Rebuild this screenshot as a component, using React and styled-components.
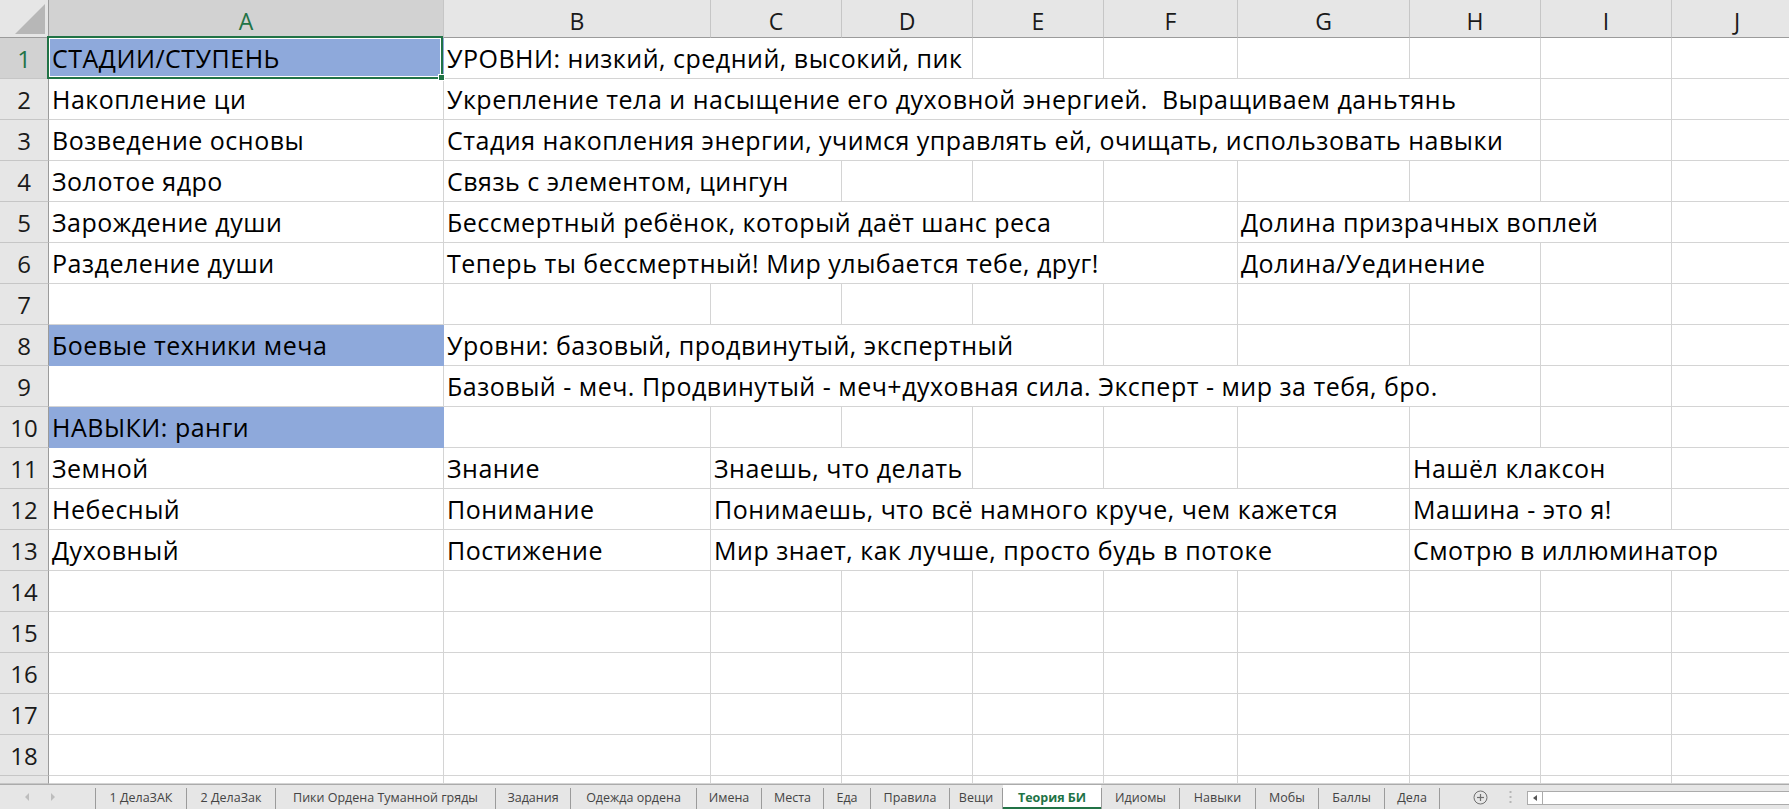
import React from "react";
import styled, { createGlobalStyle, css } from "styled-components";

const FONT = `"Open Sans", "Noto Sans", sans-serif`;

const GlobalStyle = createGlobalStyle`
  html, body { margin: 0; padding: 0; background: #fff; overflow: hidden; }
  #root { width: 1789px; height: 809px; }
`;

const COLS = ["A", "B", "C", "D", "E", "F", "G", "H", "I", "J"];
const WIDTHS = [395, 267, 131, 131, 131, 134, 172, 131, 131, 131];

const empty = (n) => Array.from({ length: n }, () => ({}));

const ROWS = [
  [{ t: "СТАДИИ/СТУПЕНЬ", fill: true, sel: true }, { t: "УРОВНИ: низкий, средний, высокий, пик", s: 3 }, ...empty(6)],
  [{ t: "Накопление ци" }, { t: "Укрепление тела и насыщение его духовной энергией.  Выращиваем даньтянь", s: 7 }, ...empty(2)],
  [{ t: "Возведение основы" }, { t: "Стадия накопления энергии, учимся управлять ей, очищать, использовать навыки", s: 7 }, ...empty(2)],
  [{ t: "Золотое ядро" }, { t: "Связь с элементом, цингун", s: 2 }, ...empty(7)],
  [{ t: "Зарождение души" }, { t: "Бессмертный ребёнок, который даёт шанс реса", s: 4 }, {}, { t: "Долина призрачных воплей", s: 3 }, {}],
  [{ t: "Разделение души" }, { t: "Теперь ты бессмертный! Мир улыбается тебе, друг!", s: 5 }, { t: "Долина/Уединение", s: 2 }, ...empty(2)],
  [...empty(10)],
  [{ t: "Боевые техники меча", fill: true }, { t: "Уровни: базовый, продвинутый, экспертный", s: 4 }, ...empty(5)],
  [{}, { t: "Базовый - меч. Продвинутый - меч+духовная сила. Эксперт - мир за тебя, бро.", s: 7 }, ...empty(2)],
  [{ t: "НАВЫКИ: ранги", fill: true }, ...empty(9)],
  [{ t: "Земной" }, { t: "Знание" }, { t: "Знаешь, что делать", s: 2 }, ...empty(3), { t: "Нашёл клаксон", s: 2 }, {}],
  [{ t: "Небесный" }, { t: "Понимание" }, { t: "Понимаешь, что всё намного круче, чем кажется", s: 5 }, { t: "Машина - это я!", s: 2 }, {}],
  [{ t: "Духовный" }, { t: "Постижение" }, { t: "Мир знает, как лучше, просто будь в потоке", s: 5 }, { t: "Смотрю в иллюминатор", s: 3 }],
  ...Array.from({ length: 5 }, () => empty(10)),
];

const TABS = [
  { t: "1 ДелаЗАК", w: 90 },
  { t: "2 ДелаЗак", w: 88 },
  { t: "Пики Ордена Туманной гряды", w: 219 },
  { t: "Задания", w: 74 },
  { t: "Одежда ордена", w: 125 },
  { t: "Имена", w: 64 },
  { t: "Места", w: 61 },
  { t: "Еда", w: 46 },
  { t: "Правила", w: 78 },
  { t: "Вещи", w: 52 },
  { t: "Теория БИ", w: 98, active: true },
  { t: "Идиомы", w: 77 },
  { t: "Навыки", w: 75 },
  { t: "Мобы", w: 62 },
  { t: "Баллы", w: 65 },
  { t: "Дела", w: 54 },
];

const Window = styled.div`
  width: 1789px;
  height: 809px;
  display: flex;
  flex-direction: column;
  overflow: hidden;
  background: #fff;
  font-family: ${FONT};
`;

const Sheet = styled.div`
  flex: 0 0 784px;
  width: 1789px;
  display: grid;
  grid-template-columns: 49px ${WIDTHS.map((w) => `${w}px`).join(" ")};
  grid-template-rows: 38px repeat(18, 41px) 8px;
  overflow: hidden;
`;

const Corner = styled.div`
  box-sizing: border-box;
  background: #e6e6e6;
  border-right: 1px solid #9b9b9b;
  border-bottom: 1px solid #9b9b9b;
  display: flex;
  align-items: flex-end;
  justify-content: flex-end;
  padding: 0 3px 3px 0;
`;

const ColHeader = styled.div`
  box-sizing: border-box;
  background: ${(p) => (p.$active ? "#d2d2d2" : "#e6e6e6")};
  color: ${(p) => (p.$active ? "#217346" : "#1a1a1a")};
  border-right: 1px solid #c6c6c6;
  border-bottom: 1px solid #9b9b9b;
  display: flex;
  align-items: center;
  justify-content: center;
  padding-top: 4px;
  font-size: 23px;
`;

const RowHeader = styled.div`
  box-sizing: border-box;
  background: ${(p) => (p.$active ? "#d2d2d2" : "#e6e6e6")};
  color: ${(p) => (p.$active ? "#217346" : "#1a1a1a")};
  border-right: 1px solid #9b9b9b;
  border-bottom: 1px solid #c6c6c6;
  display: flex;
  align-items: center;
  justify-content: center;
  font-size: 24px;
`;

const Cell = styled.div`
  grid-column: span ${(p) => p.$span};
  box-sizing: border-box;
  position: relative;
  min-width: 0;
  border-right: 1px solid ${(p) => (p.$fill ? "#8ea9db" : "#d4d4d4")};
  border-bottom: 1px solid ${(p) => (p.$fill ? "#8ea9db" : "#d4d4d4")};
  background: ${(p) => (p.$fill ? "#8ea9db" : "transparent")};
  display: flex;
  align-items: flex-end;
  padding: 0 0 7px 3px;
  font-size: 25px;
  line-height: 25px;
  letter-spacing: 0.5px;
  white-space: pre;
  color: #000;
`;

const Selection = styled.div`
  position: absolute;
  left: -2px;
  top: -2px;
  right: 0;
  bottom: -1px;
  border: 2px solid #217346;
  box-shadow: inset 0 0 0 1px #fff;
  z-index: 2;
  pointer-events: none;
`;

const Handle = styled.div`
  position: absolute;
  right: -4px;
  bottom: -4px;
  width: 7px;
  height: 7px;
  box-sizing: border-box;
  background: #217346;
  border: 1px solid #fff;
`;

const TabBar = styled.div`
  flex: 1;
  display: flex;
  align-items: stretch;
  box-sizing: border-box;
  background: #e6e6e6;
  border-top: 1px solid #ababab;
  font-size: 12.5px;
  color: #444;
`;

const NavArea = styled.div`
  width: 95px;
  display: flex;
  align-items: center;
  padding-left: 24px;
  gap: 20px;
  box-sizing: border-box;
`;

const Separator = styled.div`
  width: 1px;
  margin-top: 3px;
  background: #9b9b9b;
`;

const Tab = styled.div`
  width: ${(p) => p.$w}px;
  box-sizing: border-box;
  display: flex;
  align-items: center;
  justify-content: center;
  white-space: nowrap;
  ${(p) =>
    p.$active &&
    css`
      background: #fff;
      color: #217346;
      font-weight: 700;
      border-bottom: 2px solid #217346;
      padding-top: 2px;
    `}
`;

const AddButton = styled.div`
  margin-left: 33px;
  display: flex;
  align-items: center;
`;

const Dots = styled.div`
  margin-left: 21px;
  display: flex;
  align-items: center;
`;

const Scrollbar = styled.div`
  flex: 1;
  margin: 6px 0 4px 15px;
  display: flex;
  background: #fff;
  border: 1px solid #ababab;
  border-right: none;
`;

const ScrollArrow = styled.div`
  width: 14px;
  border-right: 1px solid #ababab;
  display: flex;
  align-items: center;
  justify-content: center;
`;

export default function App() {
  return (
    <Window>
      <GlobalStyle />
      <Sheet>
        <Corner>
          <svg width="30" height="30" viewBox="0 0 30 30">
            <polygon points="30,0 30,30 0,30" fill="#b7b7b7" />
          </svg>
        </Corner>
        {COLS.map((c, i) => (
          <ColHeader key={c} $active={i === 0}>
            {c}
          </ColHeader>
        ))}
        {ROWS.map((row, r) => (
          <React.Fragment key={r}>
            <RowHeader $active={r === 0}>{r + 1}</RowHeader>
            {row.map((cell, j) => (
              <Cell key={j} $span={cell.s || 1} $fill={cell.fill}>
                {cell.t}
                {cell.sel && (
                  <Selection>
                    <Handle />
                  </Selection>
                )}
              </Cell>
            ))}
          </React.Fragment>
        ))}
        <RowHeader />
        {COLS.map((c) => (
          <Cell key={c} $span={1} />
        ))}
      </Sheet>
      <TabBar>
        <NavArea>
          <svg width="6" height="8" viewBox="0 0 6 8">
            <polygon points="5,0 5,8 1,4" fill="#bdbdbd" />
          </svg>
          <svg width="6" height="8" viewBox="0 0 6 8">
            <polygon points="1,0 1,8 5,4" fill="#bdbdbd" />
          </svg>
        </NavArea>
        {TABS.map((tab) => (
          <React.Fragment key={tab.t}>
            <Separator />
            <Tab $w={tab.w} $active={tab.active}>
              {tab.t}
            </Tab>
          </React.Fragment>
        ))}
        <Separator />
        <AddButton>
          <svg width="15" height="15" viewBox="0 0 15 15">
            <circle cx="7.5" cy="7.5" r="6.5" fill="none" stroke="#6f6f6f" strokeWidth="1" />
            <line x1="7.5" y1="4" x2="7.5" y2="11" stroke="#6f6f6f" strokeWidth="1.2" />
            <line x1="4" y1="7.5" x2="11" y2="7.5" stroke="#6f6f6f" strokeWidth="1.2" />
          </svg>
        </AddButton>
        <Dots>
          <svg width="3" height="12" viewBox="0 0 3 12">
            <rect x="0.5" y="0" width="2" height="2" fill="#b5b5b5" />
            <rect x="0.5" y="5" width="2" height="2" fill="#b5b5b5" />
            <rect x="0.5" y="10" width="2" height="2" fill="#b5b5b5" />
          </svg>
        </Dots>
        <Scrollbar>
          <ScrollArrow>
            <svg width="4" height="6" viewBox="0 0 4 6">
              <polygon points="4,0 4,6 0,3" fill="#555" />
            </svg>
          </ScrollArrow>
        </Scrollbar>
      </TabBar>
    </Window>
  );
}
